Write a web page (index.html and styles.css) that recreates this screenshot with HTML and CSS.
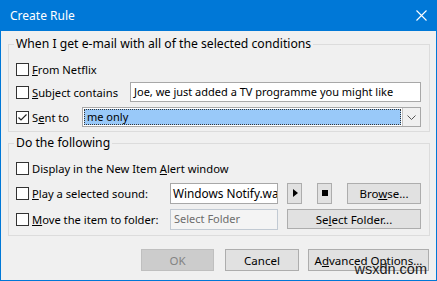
FILE: index.html
```html
<!DOCTYPE html>
<html lang="en">
<head>
    <meta charset="UTF-8">
    <title>Create Rule</title>
    <link rel="stylesheet" href="styles.css">
</head>
<body>
    <div class="dialog">
        <div class="titlebar">
            <span class="title">Create Rule</span>
            <svg class="close" width="11" height="11" viewBox="0 0 11 11">
                <path d="M0.5 0.5 L10.5 10.5 M10.5 0.5 L0.5 10.5" stroke="#fff" stroke-width="1.1" fill="none"/>
            </svg>
        </div>

        <div class="content">
            <!-- Conditions -->
            <fieldset class="group conditions">
                <legend>When I get e-mail with all of the selected conditions</legend>
                <div class="row">
                    <label class="check"><span class="box"></span><span><u>F</u>rom Netflix</span></label>
                </div>
                <div class="row">
                    <label class="check col-subject"><span class="box"></span><span><u>S</u>ubject contains</span></label>
                    <div class="textbox subject">Joe, we just added a TV programme you might like</div>
                </div>
                <div class="row">
                    <label class="check col-sent">
                        <span class="box">
                            <svg width="11" height="11" viewBox="0 0 11 11"><path d="M1.5 5.5 L4 8 L9.5 2.5" stroke="#222" stroke-width="1.2" fill="none"/></svg>
                        </span>
                        <span>S<u>e</u>nt to</span>
                    </label>
                    <div class="combo">
                        <div class="combo-value"><span>me only</span></div>
                        <div class="combo-btn">
                            <svg width="9" height="5" viewBox="0 0 9 5"><path d="M0.5 0.5 L4.5 4.5 L8.5 0.5" stroke="#555" stroke-width="1" fill="none"/></svg>
                        </div>
                    </div>
                </div>
            </fieldset>

            <!-- Actions -->
            <fieldset class="group actions">
                <legend>Do the following</legend>
                <div class="row">
                    <label class="check"><span class="box"></span><span>Display in the New Item <u>A</u>lert window</span></label>
                </div>
                <div class="row">
                    <label class="check col-action"><span class="box"></span><span><u>P</u>lay a selected sound:</span></label>
                    <div class="textbox small sound">Windows Notify.wav</div>
                    <button class="btn icon-btn play"><span class="tri"></span></button>
                    <button class="btn icon-btn stop"><span class="sq"></span></button>
                    <button class="btn browse">Bro<u>w</u>se...</button>
                </div>
                <div class="row">
                    <label class="check col-action"><span class="box"></span><span><u>M</u>ove the item to folder:</span></label>
                    <div class="textbox small disabled">Select Folder</div>
                    <button class="btn folder">Se<u>l</u>ect Folder...</button>
                </div>
            </fieldset>
        </div>

        <div class="buttons">
            <button class="btn ok" disabled>OK</button>
            <button class="btn cancel">Cancel</button>
            <button class="btn advanced">A<u>d</u>vanced Options...</button>
        </div>

        <span class="watermark">wsxdn.com</span>
    </div>
</body>
</html>
```

FILE: styles.css
```css
* {
    margin: 0;
    padding: 0;
    box-sizing: border-box;
}
body {
    font-family: 'Noto Sans', 'Open Sans', sans-serif;
    font-size: 11px;
    color: #000;
    background: #f0f0f0;
}
.dialog {
    position: relative;
    width: 437px;
    height: 281px;
    background: #f0f0f0;
    border: 1px solid #0078d7;
    border-top: none;
    display: flex;
    flex-direction: column;
}

/* Title bar */
.titlebar {
    height: 31px;
    margin: 0 -1px;
    background: #0078d7;
    color: #fff;
    display: flex;
    align-items: center;
    justify-content: space-between;
    padding: 0 10px 1px 10px;
}
.title {
    font-size: 12px;
}

/* Groups */
.content {
    padding: 5px 6px 0 7px;
}
.group {
    border: 1px solid #dcdcdc;
    padding: 7px 8px 4px 7px;
    min-width: 0;
}
.group legend {
    padding: 0 2px;
    margin-left: -2px;
    font-size: 12.2px;
    line-height: 16px;
}
.actions {
    margin-top: 3px;
    padding-bottom: 6px;
}
.row {
    display: flex;
    align-items: center;
    height: 20px;
}
.conditions .row + .row {
    margin-top: 3px;
}
.conditions .row:last-child {
    margin-top: 5px;
}
.actions .row + .row {
    margin-top: 5px;
}
.actions .row:last-child {
    margin-top: 6px;
}

/* Checkboxes */
.check {
    display: flex;
    align-items: center;
    white-space: nowrap;
    font-size: 11.2px;
}
.box {
    width: 13px;
    height: 13px;
    border: 1px solid #333;
    background: #fff;
    margin-right: 3px;
    display: flex;
    align-items: center;
    justify-content: center;
    flex-shrink: 0;
}
.col-subject {
    width: 114px;
}
.col-sent {
    width: 66px;
}
.col-action {
    width: 154px;
}

/* Text fields */
.textbox {
    height: 20px;
    border: 1px solid #a8a8a8;
    background: #fff;
    padding: 0 3px;
    line-height: 18px;
    white-space: nowrap;
    overflow: hidden;
}
.subject {
    width: 291px;
    margin-left: auto;
}
.small {
    width: 108px;
    height: 21px;
}
.sound {
    font-size: 11.8px;
    padding-left: 2px;
}
.disabled {
    background: #f4f4f4;
    border-color: #c2cad3;
    color: #6d6d6d;
}
.combo {
    width: 339px;
    height: 20px;
    margin-left: auto;
    border: 1px solid #a8a8a8;
    background: #fff;
    display: flex;
}
.combo-value {
    flex: 1;
    padding: 1px;
}
.combo-value span {
    display: block;
    height: 100%;
    background: #99c9f9;
    border: 1px dotted #333;
    padding: 0 2px;
    line-height: 14px;
}
.combo-btn {
    width: 18px;
    background: #f0f0f0;
    border-left: 1px solid #c4c4c4;
    display: flex;
    align-items: center;
    justify-content: center;
}

/* Buttons */
.btn {
    font-family: inherit;
    font-size: 11.5px;
    color: #000;
    background: #e1e1e1;
    border: 1px solid #adadad;
    height: 21px;
    white-space: nowrap;
}
.icon-btn {
    width: 15px;
    display: flex;
    align-items: center;
    justify-content: center;
}
.play {
    margin-left: 9px;
}
.stop {
    margin-left: 15px;
}
.tri {
    width: 0;
    height: 0;
    border-top: 4px solid transparent;
    border-bottom: 4px solid transparent;
    border-left: 5px solid #000;
    margin-left: 1px;
}
.sq {
    width: 6px;
    height: 6px;
    background: #000;
}
.browse {
    width: 74px;
    margin-left: 15px;
}
.folder {
    width: 134px;
    margin-left: 9px;
    height: 20px;
}

.buttons {
    display: flex;
    justify-content: flex-end;
    padding: 13px 7px 0 0;
}
.buttons .btn {
    height: 22px;
    margin-left: 11px;
}
.ok {
    width: 73px;
    background: #cccccc;
    border-color: #bfbfbf;
    color: #838383;
}
.cancel {
    width: 74px;
}
.advanced {
    width: 121px;
}
.buttons .advanced {
    margin-left: 9px;
}

/* Site watermark over the corner */
.watermark {
    position: absolute;
    right: 9px;
    bottom: 3px;
    font-family: 'Liberation Sans', Arial, sans-serif;
    font-size: 14.5px;
    color: #1a1a1a;
}
```
